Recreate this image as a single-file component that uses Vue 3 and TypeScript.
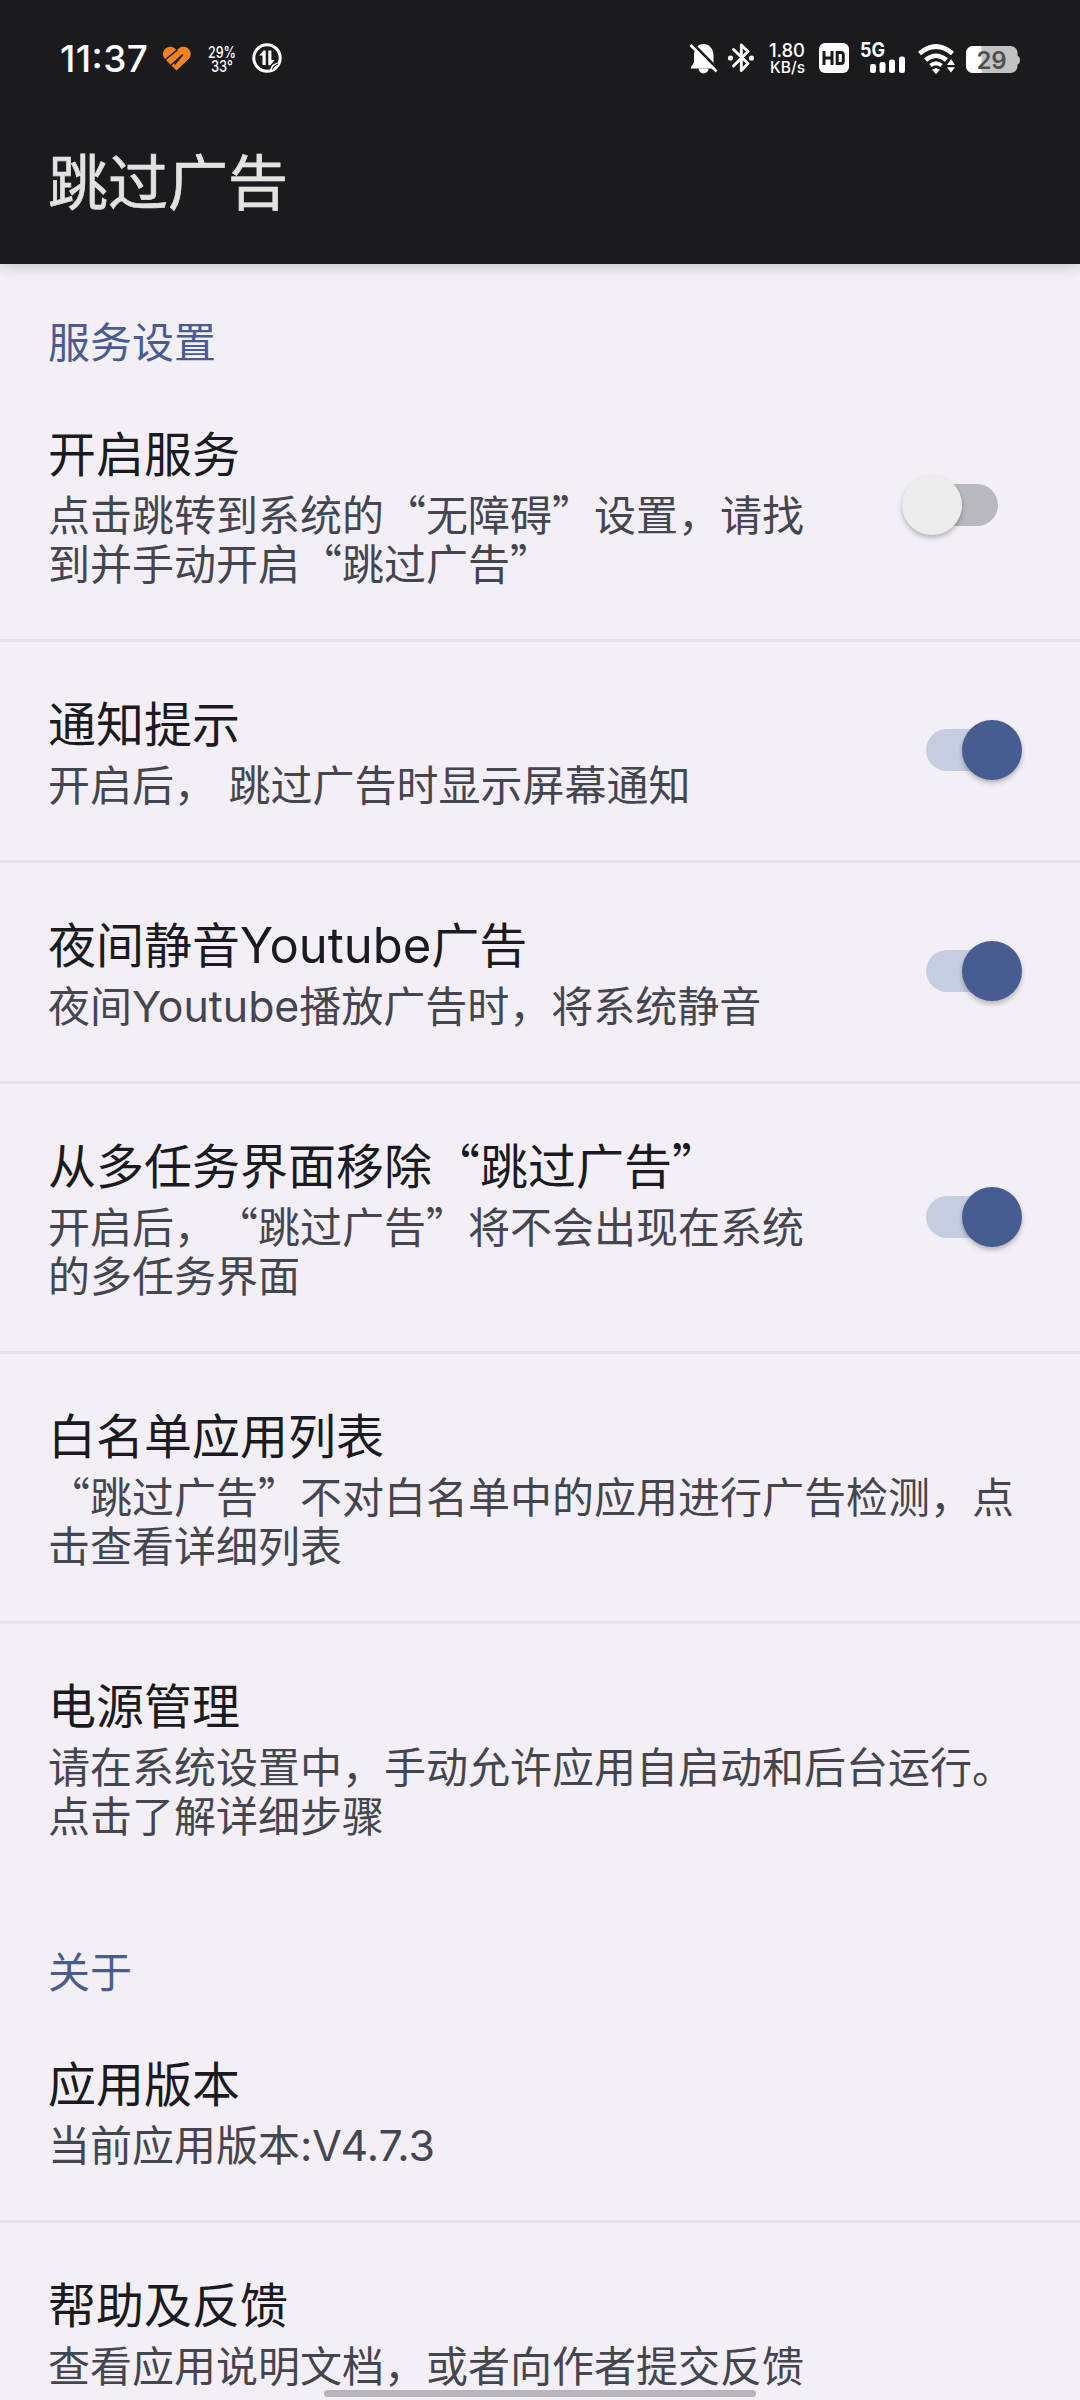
<script setup lang="ts">
import { ref } from 'vue'

interface Preference {
  title: string
  summary: string[]
  enabled?: boolean
}

interface Category {
  label: string
  items: Preference[]
}

const categories = ref<Category[]>([
  {
    label: '服务设置',
    items: [
      {
        title: '开启服务',
        summary: ['点击跳转到系统的“无障碍”设置，请找', '到并手动开启“跳过广告”'],
        enabled: false,
      },
      { title: '通知提示', summary: ['开启后， 跳过广告时显示屏幕通知'], enabled: true },
      {
        title: '夜间静音Youtube广告',
        summary: ['夜间Youtube播放广告时，将系统静音'],
        enabled: true,
      },
      {
        title: '从多任务界面移除“跳过广告”',
        summary: ['开启后，“跳过广告”将不会出现在系统', '的多任务界面'],
        enabled: true,
      },
      {
        title: '白名单应用列表',
        summary: ['“跳过广告”不对白名单中的应用进行广告检测，点', '击查看详细列表'],
      },
      {
        title: '电源管理',
        summary: ['请在系统设置中，手动允许应用自启动和后台运行。', '点击了解详细步骤'],
      },
    ],
  },
  {
    label: '关于',
    items: [
      { title: '应用版本', summary: ['当前应用版本:V4.7.3'] },
      { title: '帮助及反馈', summary: ['查看应用说明文档，或者向作者提交反馈'] },
    ],
  },
])

// Latin runs use a different face from the Chinese text around them.
const runs = (text: string): string[] => text.split(/([A-Za-z0-9.:]+)/).filter(Boolean)
const isLatin = (run: string): boolean => /^[A-Za-z0-9.:]/.test(run)

const toggle = (item: Preference): void => {
  item.enabled = !item.enabled
}
</script>

<template>
  <div class="screen">
    <header class="top">
      <div class="status">
        <div class="status-side">
          <svg width="92" height="40" viewBox="58 38 92 40">
            <text x="60" y="72" font-size="37" font-weight="450" textLength="88">11:37</text>
          </svg>
          <svg class="heart" width="32" height="32" viewBox="161 42 32 32">
            <path d="M176.500 70.500L164.500 58.500A7.200 7.200 0 0 1 174.500 48.300L176.800 50.200L179 48.300A7.300 7.300 0 0 1 189.400 58.300Z" fill="#f5821f" />
            <path d="M165 60L177.300 49.800M170 66L182.800 54.600M182.800 54.600L174.500 64.500" fill="none" stroke="#1b1b1f" stroke-width="1.500" />
          </svg>
          <svg class="temp" width="30" height="34" viewBox="207 42 30 34">
            <text x="208" y="58.500" font-size="16" font-weight="500" textLength="28" lengthAdjust="spacingAndGlyphs">29%</text>
            <text x="211" y="73" font-size="16" font-weight="500" textLength="22" lengthAdjust="spacingAndGlyphs">33°</text>
          </svg>
          <svg class="data" width="32" height="32" viewBox="251 42 32 32">
            <circle cx="267" cy="58" r="13.200" fill="none" stroke="#fff" stroke-width="3" />
            <path d="M259.300 55.500L263.500 50.500H265.700V65H262.500V55.500ZM268.300 50.500H271.400V60H274.600L270.400 65.300H268.300Z" fill="#fff" />
            <path d="M270 71Q270 63 280.500 62Q279 69 270 71Z" fill="#fff" />
            <path d="M272.500 69.500Q273 66 278 64" fill="none" stroke="#1b1b1f" stroke-width="1.200" />
          </svg>
        </div>
        <div class="status-side">
          <svg width="30" height="34" viewBox="689 41 30 34">
            <path d="M694 68V55.500C694 48.500 698 44 703.500 44S713.500 48.500 713.500 55.500V62.500L716 67V68.500H691V67L694 62.500Z" fill="#fff" />
            <path d="M698.500 68.500A5 5 0 0 0 708.500 68.500Z" fill="#fff" />
            <path d="M692.500 43.500L718.500 70" stroke="#1b1b1f" stroke-width="3" />
            <path d="M690.500 45L716.500 71.500" stroke="#fff" stroke-width="2.600" />
          </svg>
          <svg class="bt" width="28" height="34" viewBox="727 41 28 34">
            <path d="M733.500 49.500L748 63.500L741.300 70.500V45L748 51.500L733.500 66" fill="none" stroke="#fff" stroke-width="2.900" stroke-linejoin="round" stroke-linecap="round" />
            <circle cx="730.500" cy="58" r="2.600" fill="#fff" />
            <circle cx="751.500" cy="58" r="2.600" fill="#fff" />
          </svg>
          <svg class="speed" width="38" height="34" viewBox="768 41 38 34">
            <text x="769" y="57" font-size="18.500" font-weight="450" textLength="36">1.80</text>
            <text x="770" y="73" font-size="15.500" font-weight="450" textLength="35">KB/s</text>
          </svg>
          <svg class="hd" width="30" height="34" viewBox="819 41 30 34">
            <rect x="819" y="43" width="30" height="30" rx="6" fill="#fff" />
            <path d="M824 51V65M832 51V65M824 58H832M837.200 52.400H841Q843.300 52.400 843.300 54.700V61.300Q843.300 63.600 841 63.600H837.200Z" fill="none" stroke="#1b1b1f" stroke-width="3" />
          </svg>
          <svg class="signal" width="46" height="34" viewBox="860 41 46 34">
            <text x="860" y="57" font-size="20" font-weight="700" textLength="25" lengthAdjust="spacingAndGlyphs">5G</text>
            <rect x="870" y="64" width="6" height="9" rx="2.300" fill="#fff" />
            <rect x="879.500" y="62" width="6" height="11" rx="2.300" fill="#fff" />
            <rect x="889" y="59.500" width="6" height="13.500" rx="2.300" fill="#fff" />
            <rect x="899" y="56.500" width="6" height="16.500" rx="2.300" fill="#fff" />
          </svg>
          <svg class="wifi" width="40" height="34" viewBox="917 41 40 34">
            <path d="M919.500 53.500Q936 39.500 952.500 53.500M925.500 60Q936 51.500 946.500 60" fill="none" stroke="#fff" stroke-width="4.600" />
            <path d="M930.500 65.500Q936 61 941.500 65.500" fill="none" stroke="#fff" stroke-width="3.800" />
            <path d="M932 69.800Q936 66.500 940 69.800L936 74Z" fill="#fff" />
            <path d="M947 65L951 59L955 65ZM947 67.300H955L951 72.500Z" fill="#fff" stroke="#1b1b1f" stroke-width="2" paint-order="stroke" />
          </svg>
          <svg class="battery" width="56" height="34" viewBox="965 41 56 34">
            <path d="M1016 55.500Q1020 55.500 1020 60T1016 64.500Z" fill="#c2c2c2" />
            <rect x="966" y="46" width="51.500" height="27" rx="7" fill="#c2c2c2" />
            <path d="M973 46H981.500V73H973A7 7 0 0 1 966 66V53A7 7 0 0 1 973 46Z" fill="#fff" />
            <text x="976.500" y="68.500" font-size="24" font-weight="600" textLength="30" class="charge">29</text>
          </svg>
        </div>
      </div>
      <h1 class="app-title">跳过广告</h1>
    </header>

    <main class="content">
      <section v-for="category in categories" :key="category.label" class="category">
        <h2 class="category-label">{{ category.label }}</h2>
        <div v-for="item in category.items" :key="item.title" class="row">
          <div class="texts">
            <div class="title">
              <span v-for="(run, i) in runs(item.title)" :key="i" :class="{ latin: isLatin(run) }">{{ run }}</span>
            </div>
            <div v-for="line in item.summary" :key="line" class="summary">
              <span v-for="(run, i) in runs(line)" :key="i" :class="{ latin: isLatin(run) }">{{ run }}</span>
            </div>
          </div>
          <button
            v-if="item.enabled !== undefined"
            type="button"
            role="switch"
            class="switch"
            :class="{ on: item.enabled }"
            :aria-checked="item.enabled"
            :aria-label="item.title"
            @click="toggle(item)"
          >
            <span class="thumb"></span>
          </button>
        </div>
      </section>
    </main>
    <div class="home-bar"></div>
  </div>
</template>

<style>
body {
  margin: 0;
  background: #f4eff6;
}
</style>

<style scoped>
.screen {
  position: relative;
  width: 1080px;
  height: 2400px;
  overflow: hidden;
  display: flex;
  flex-direction: column;
  background: #f4eff6;
  font-family: 'Noto Sans CJK SC', 'Noto Sans', sans-serif;
  text-spacing-trim: space-all;
}

.top {
  flex: none;
  box-sizing: border-box;
  height: 264px;
  background: #1b1b1f;
  box-shadow: 0 2px 14px rgba(0, 0, 0, 0.2);
  z-index: 1;
}

.status {
  height: 116px;
  padding: 0 59px 0 58px;
  display: flex;
  justify-content: space-between;
  align-items: center;
}

.status-side {
  display: flex;
  align-items: center;
}

.status svg {
  display: block;
  flex: none;
  overflow: visible;
}

.status text {
  font-family: Inter, sans-serif;
  fill: #fff;
}

.status .charge {
  fill: #505050;
}

.heart {
  margin-left: 11px;
}

.temp {
  margin-left: 14px;
}

.data {
  margin-left: 14px;
}

.bt {
  margin-left: 8px;
}

.speed,
.hd {
  margin-left: 13px;
}

.signal,
.wifi {
  margin-left: 11px;
}

.battery {
  margin-left: 8px;
}

.app-title {
  margin: 19px 0 0 48px;
  color: #e3e2e0;
  font-size: 60px;
  font-weight: 400;
  line-height: 88px;
  -webkit-text-stroke: 0.7px #e3e2e0;
}

.content {
  flex: 1;
  min-height: 0;
}

.category-label {
  box-sizing: border-box;
  height: 108px;
  margin: 0;
  padding: 46px 48px 0;
  color: #475d92;
  font-size: 42px;
  font-weight: 400;
  line-height: 60px;
}

.row {
  display: flex;
  justify-content: space-between;
  align-items: center;
  box-sizing: border-box;
  padding: 51px 58px 53px 48px;
  border-bottom: 3px solid #e7e2e9;
}

.row:last-child {
  border-bottom-color: transparent;
}

.texts {
  white-space: pre;
  word-spacing: 3px;
}

.title {
  height: 65px;
  color: #1a1b20;
  font-size: 48px;
  line-height: 56px;
}

.summary {
  height: 49px;
  color: #44464f;
  font-size: 42px;
  line-height: 49px;
}

.latin {
  font-family: Inter, sans-serif;
  font-size: 1.02em;
  line-height: 1;
}

.switch {
  display: flex;
  align-items: center;
  flex: none;
  width: 72px;
  height: 42px;
  margin: 0 24px 0 0;
  padding: 0;
  border: 0;
  border-radius: 21px;
  background: #b9b8be;
}

.thumb {
  flex: none;
  width: 60px;
  height: 60px;
  margin-left: -24px;
  border-radius: 50%;
  background: #ececec;
  box-shadow: 0 3px 5px rgba(0, 0, 0, 0.25);
}

.switch.on {
  background: #c6cde0;
}

.on .thumb {
  margin-left: 36px;
  background: #475d92;
}

.home-bar {
  position: absolute;
  left: 324px;
  top: 2390px;
  width: 432px;
  height: 7px;
  border-radius: 4px;
  background: #b9b4bb;
}
</style>
